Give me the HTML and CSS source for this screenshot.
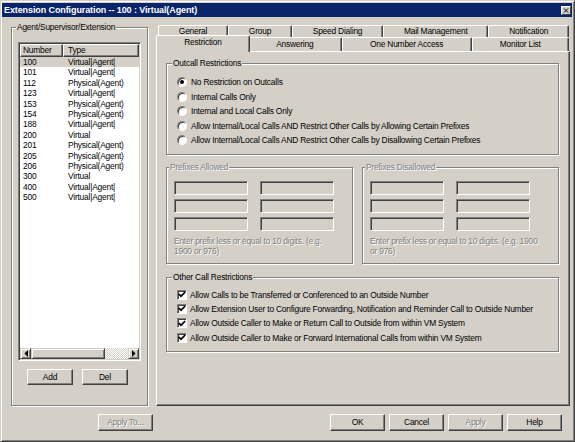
FILE: index.html
```html
<!DOCTYPE html>
<html lang="en">
  <head>
    <meta charset="UTF-8" />
    <title>Extension Configuration</title>
    <link rel="stylesheet" href="styles.css">
  </head>
  <body>
    <div class="dialog">
      <div class="titlebar">
        <span class="title">Extension Configuration -- 100 : Virtual(Agent)</span>
        <span class="close">
          <svg width="8" height="7" viewBox="0 0 8 7"><path d="M1 0.5 L7 6.5 M7 0.5 L1 6.5" stroke="#000" stroke-width="1.4" /></svg>
        </span>
      </div>

      <div class="main">
        <fieldset class="group agents">
          <legend>Agent/Supervisor/Extension</legend>
          <div class="listview">
            <div class="lv-header">
              <div class="hd num">Number</div>
              <div class="hd type">Type</div>
            </div>
            <div class="lv-rows">
              <div class="row selected"><span class="num">100</span><span class="type">Virtual|Agent|</span></div>
              <div class="row"><span class="num">101</span><span class="type">Virtual|Agent|</span></div>
              <div class="row"><span class="num">112</span><span class="type">Physical(Agent)</span></div>
              <div class="row"><span class="num">123</span><span class="type">Virtual|Agent|</span></div>
              <div class="row"><span class="num">153</span><span class="type">Physical(Agent)</span></div>
              <div class="row"><span class="num">154</span><span class="type">Physical(Agent)</span></div>
              <div class="row"><span class="num">188</span><span class="type">Virtual|Agent|</span></div>
              <div class="row"><span class="num">200</span><span class="type">Virtual</span></div>
              <div class="row"><span class="num">201</span><span class="type">Physical(Agent)</span></div>
              <div class="row"><span class="num">205</span><span class="type">Physical(Agent)</span></div>
              <div class="row"><span class="num">206</span><span class="type">Physical(Agent)</span></div>
              <div class="row"><span class="num">300</span><span class="type">Virtual</span></div>
              <div class="row"><span class="num">400</span><span class="type">Virtual|Agent|</span></div>
              <div class="row"><span class="num">500</span><span class="type">Virtual|Agent|</span></div>
            </div>
            <div class="hscroll">
              <span class="sb-btn"><svg width="4" height="7" viewBox="0 0 4 7"><path d="M4 0 L0.5 3.5 L4 7 Z" fill="#000" /></svg></span>
              <span class="sb-thumb"></span>
              <span class="sb-track"></span>
              <span class="sb-btn"><svg width="4" height="7" viewBox="0 0 4 7"><path d="M0 0 L3.5 3.5 L0 7 Z" fill="#000" /></svg></span>
            </div>
          </div>
          <div class="list-buttons">
            <button class="btn small">Add</button>
            <button class="btn small">Del</button>
          </div>
        </fieldset>

        <div class="tabs">
          <div class="tabrow">
            <div class="tab">General</div>
            <div class="tab">Group</div>
            <div class="tab">Speed Dialing</div>
            <div class="tab">Mail Management</div>
            <div class="tab">Notification</div>
          </div>
          <div class="tabrow front">
            <div class="tab active">Restriction</div>
            <div class="tab">Answering</div>
            <div class="tab">One Number Access</div>
            <div class="tab">Monitor List</div>
          </div>
          <div class="panel">
            <fieldset class="group outcall">
              <legend>Outcall Restrictions</legend>
              <div class="option"><span class="radio checked"></span>No Restriction on Outcalls</div>
              <div class="option"><span class="radio"></span>Internal Calls Only</div>
              <div class="option"><span class="radio"></span>Internal and Local Calls Only</div>
              <div class="option"><span class="radio"></span>Allow Internal/Local Calls AND Restrict Other Calls by Allowing Certain Prefixes</div>
              <div class="option"><span class="radio"></span>Allow Internal/Local Calls AND Restrict Other Calls by Disallowing Certain Prefixes</div>
            </fieldset>

            <div class="prefixes">
              <fieldset class="group disabled">
                <legend>Prefixes Allowed</legend>
                <div class="boxes">
                  <span class="textbox"></span><span class="textbox"></span>
                  <span class="textbox"></span><span class="textbox"></span>
                  <span class="textbox"></span><span class="textbox"></span>
                </div>
                <p class="hint">Enter prefix less or equal to 10 digits. (e.g.<br>1900 or 976)</p>
              </fieldset>
              <fieldset class="group disabled">
                <legend>Prefixes Disallowed</legend>
                <div class="boxes">
                  <span class="textbox"></span><span class="textbox"></span>
                  <span class="textbox"></span><span class="textbox"></span>
                  <span class="textbox"></span><span class="textbox"></span>
                </div>
                <p class="hint">Enter prefix less or equal to 10 digits. (e.g. 1900<br>or 976)</p>
              </fieldset>
            </div>

            <fieldset class="group other">
              <legend>Other Call Restrictions</legend>
              <div class="option"><span class="check"><svg width="8" height="7" viewBox="0 0 8 7"><path d="M0.8 3 L3 5.2 L7.2 1" fill="none" stroke="#000" stroke-width="1.7" /></svg></span>Allow Calls to be Transferred or Conferenced to an Outside Number</div>
              <div class="option"><span class="check"><svg width="8" height="7" viewBox="0 0 8 7"><path d="M0.8 3 L3 5.2 L7.2 1" fill="none" stroke="#000" stroke-width="1.7" /></svg></span>Allow Extension User to Configure Forwarding, Notification and Reminder Call to Outside Number</div>
              <div class="option"><span class="check"><svg width="8" height="7" viewBox="0 0 8 7"><path d="M0.8 3 L3 5.2 L7.2 1" fill="none" stroke="#000" stroke-width="1.7" /></svg></span>Allow Outside Caller to Make or Return Call to Outside from within VM System</div>
              <div class="option"><span class="check"><svg width="8" height="7" viewBox="0 0 8 7"><path d="M0.8 3 L3 5.2 L7.2 1" fill="none" stroke="#000" stroke-width="1.7" /></svg></span>Allow Outside Caller to Make or Forward International Calls from within VM System</div>
            </fieldset>
          </div>
        </div>
      </div>

      <div class="footer">
        <button class="btn wide" disabled>Apply To...</button>
        <div class="footer-right">
          <button class="btn wide">OK</button>
          <button class="btn wide">Cancel</button>
          <button class="btn wide" disabled>Apply</button>
          <button class="btn wide">Help</button>
        </div>
      </div>
    </div>
  </body>
</html>
```

FILE: styles.css
```css
body {
  margin: 0;
  background: #fff;
  font-family: "Liberation Sans", Arial, sans-serif;
  font-size: 8.4px;
  letter-spacing: -0.2px;
  color: #000;
}
.dialog {
  width: 575px;
  height: 442px;
  box-sizing: border-box;
  background: #d4d0c8;
  border: 1px solid;
  border-color: #d4d0c8 #404040 #404040 #d4d0c8;
  box-shadow: inset 1px 1px #fff, inset -1px -1px #808080;
  padding: 2px 2px 0 1px;
  display: flex;
  flex-direction: column;
}
.titlebar {
  height: 14px;
  background: #0a246a;
  color: #fff;
  display: flex;
  align-items: center;
  justify-content: space-between;
  padding-left: 2px;
}
.title {
  font-weight: bold;
  font-size: 9px;
  letter-spacing: -0.1px;
}
.close {
  width: 10px;
  height: 9px;
  box-sizing: border-box;
  margin-right: 1px;
  background: #d4d0c8;
  border: 1px solid;
  border-color: #fff #404040 #404040 #fff;
  display: flex;
  align-items: center;
  justify-content: center;
}
.close svg {
  width: 6px;
  height: 5px;
}

/* group boxes */
.group {
  margin: 0;
  border: 1px solid #808080;
  box-shadow: inset 1px 1px #fff, 1px 1px #fff;
  min-width: 0;
}
.group legend {
  background: #d4d0c8;
  padding: 0 1px;
  line-height: 11px;
}
.group.disabled legend,
.hint {
  color: #808080;
  text-shadow: 1px 1px #fff;
}

.main {
  display: flex;
  padding: 5px 0 0 9px;
}
.agents {
  width: 137px;
  box-sizing: border-box;
  padding: 9px 6px 7px 6px;
}
.agents legend {
  margin-left: -2px;
}

/* list view */
.listview {
  height: 319px;
  box-sizing: border-box;
  background: #fff;
  border: 1px solid;
  border-color: #808080 #fff #fff #808080;
  box-shadow: inset 1px 1px #404040, inset -1px -1px #d4d0c8;
  padding: 1px;
  display: flex;
  flex-direction: column;
}
.lv-header {
  display: flex;
  height: 13px;
}
.hd {
  box-sizing: border-box;
  background: #d4d0c8;
  border: 1px solid;
  border-color: #fff #404040 #404040 #fff;
  box-shadow: inset -1px -1px #808080;
  line-height: 11px;
  padding-left: 2px;
}
.hd.num {
  width: 43px;
}
.hd.type {
  flex: 1;
  padding-left: 4px;
}
.lv-rows {
  flex: 1;
}
.row {
  display: flex;
  height: 10.4px;
  line-height: 10.4px;
}
.row.selected {
  background: #d4d0c8;
}
.row .num {
  width: 43px;
  padding-left: 3px;
  box-sizing: border-box;
}
.row .type {
  padding-left: 5px;
}
.hscroll {
  display: flex;
  height: 11px;
}
.sb-btn {
  width: 11px;
  box-sizing: border-box;
  background: #d4d0c8;
  border: 1px solid;
  border-color: #d4d0c8 #404040 #404040 #d4d0c8;
  box-shadow: inset 1px 1px #fff, inset -1px -1px #808080;
  display: flex;
  align-items: center;
  justify-content: center;
}
.sb-thumb {
  width: 74px;
  box-sizing: border-box;
  background: #d4d0c8;
  border: 1px solid;
  border-color: #d4d0c8 #404040 #404040 #d4d0c8;
  box-shadow: inset 1px 1px #fff, inset -1px -1px #808080;
}
.sb-track {
  flex: 1;
  background: repeating-conic-gradient(#fff 0 25%, #d4d0c8 0 50%) 0 0 / 2px 2px;
}
.list-buttons {
  display: flex;
  gap: 9px;
  padding: 8px 0 0 9px;
}

/* buttons */
.btn {
  font: inherit;
  letter-spacing: inherit;
  color: #000;
  background: #d4d0c8;
  border: 1px solid;
  border-color: #fff #404040 #404040 #fff;
  box-shadow: inset -1px -1px #808080;
  padding: 0;
  margin: 0;
  line-height: 13px;
}
.btn:disabled {
  color: #808080;
  text-shadow: 1px 1px #fff;
}
.btn.small {
  width: 46px;
  height: 16px;
}
.btn.wide {
  width: 55px;
  height: 17px;
}

/* tabs */
.tabs {
  width: 414px;
  height: 381px;
  margin: 3px 0 0 8px;
  display: flex;
  flex-direction: column;
}
.tabrow {
  display: flex;
  height: 12px;
  padding: 0 1px 0 2px;
}
.tabrow.front {
  height: 14px;
}
.tab {
  flex: 1 1 auto;
  box-sizing: border-box;
  text-align: center;
  background: #d4d0c8;
  border-top: 1px solid #fff;
  border-left: 1px solid #fff;
  border-right: 1px solid #404040;
  box-shadow: inset -1px 0 #808080;
  border-radius: 2px 2px 0 0;
  line-height: 11px;
  padding: 0 4px;
}
.tabrow.front .tab {
  line-height: 13px;
}
.tab.active {
  position: relative;
  z-index: 1;
  margin: -2px -2px -1px;
  line-height: 12px;
}
.panel {
  flex: 1;
  box-sizing: border-box;
  border-top: 1px solid #fff;
  border-left: 1px solid #fff;
  border-right: 1px solid #404040;
  border-bottom: 1px solid #404040;
  box-shadow: inset -1px -1px #808080;
  padding: 6px 10px 0 9px;
}
.panel .group {
  padding: 0 8px 0 10px;
}
.panel .group legend {
  margin-left: -5px;
}
.outcall {
  padding-top: 6px !important;
  padding-bottom: 6px !important;
}
.option {
  display: flex;
  align-items: center;
  height: 14.5px;
  white-space: nowrap;
}
.radio {
  width: 10px;
  height: 10px;
  box-sizing: border-box;
  border-radius: 50%;
  border: 1px solid;
  border-color: #808080 #fff #fff #808080;
  box-shadow: inset 1px 1px #404040;
  background: #fff;
  margin-right: 4px;
  display: flex;
  align-items: center;
  justify-content: center;
}
.radio.checked::after {
  content: "";
  width: 4px;
  height: 4px;
  border-radius: 50%;
  background: #000;
}
.check {
  width: 10px;
  height: 10px;
  box-sizing: border-box;
  border: 1px solid;
  border-color: #808080 #fff #fff #808080;
  box-shadow: inset 1px 1px #404040;
  background: #fff;
  margin-right: 3px;
  display: flex;
  align-items: center;
  justify-content: center;
}
.prefixes {
  display: grid;
  grid-template-columns: 187px 1fr;
  gap: 9px;
  margin-top: 7px;
}
.prefixes .group {
  padding: 8px 6px 7px 7px !important;
}
.boxes {
  display: grid;
  grid-template-columns: 74px 74px;
  column-gap: 12px;
  row-gap: 4px;
}
.textbox {
  height: 14px;
  box-sizing: border-box;
  border: 1px solid;
  border-color: #808080 #fff #fff #808080;
  box-shadow: inset 1px 1px #404040;
  background: #d4d0c8;
}
.hint {
  margin: 5px 0 0;
  line-height: 10px;
}
.other {
  margin-top: 8px;
  padding-top: 5px !important;
  padding-bottom: 6px !important;
}
.other .option {
  height: 14.3px;
}

/* footer */
.footer {
  display: flex;
  margin-top: 8px;
  padding: 0 10px 0 96px;
}
.footer-right {
  display: flex;
  gap: 4px;
  margin-left: auto;
}
```
